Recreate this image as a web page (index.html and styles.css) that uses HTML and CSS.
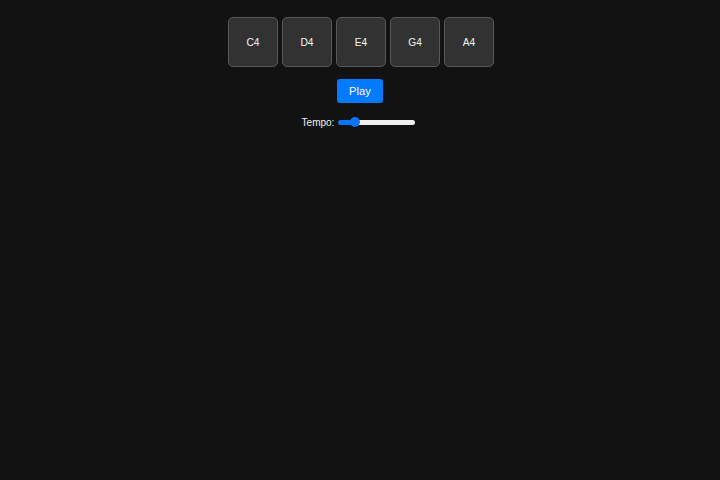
FILE: index.html
```html
<!DOCTYPE html>
<html lang="en">
<head>
<meta charset="utf-8">
<title>Sequencer</title>
<link rel="stylesheet" href="styles.css">
</head>
<body>
<main class="app">
  <div class="pads">
    <div class="pad">C4</div>
    <div class="pad">D4</div>
    <div class="pad">E4</div>
    <div class="pad">G4</div>
    <div class="pad">A4</div>
  </div>
  <button class="play">Play</button>
  <div class="tempo">
    <label class="tempo-label" for="tempo">Tempo:</label>
    <input class="tempo-range" id="tempo" type="range" min="0" max="100" value="17">
  </div>
</main>
</body>
</html>
```

FILE: styles.css
```css
html, body {
  margin: 0;
  padding: 0;
  background: #121212;
  height: 100%;
}

body {
  font-family: "Liberation Sans", Arial, sans-serif;
  color: #f0f0f0;
}

.app {
  display: flex;
  flex-direction: column;
  align-items: center;
  padding-top: 17px;
}

.pads {
  display: flex;
  gap: 4px;
  padding-left: 2px;
}

.pad {
  box-sizing: border-box;
  width: 50px;
  height: 50px;
  display: flex;
  align-items: center;
  justify-content: center;
  background: #323232;
  border: 1px solid #585858;
  border-radius: 5px;
  font-size: 10.2px;
  color: #f4f4f4;
}

.play {
  margin-top: 12px;
  box-sizing: border-box;
  width: 46px;
  height: 24px;
  padding: 0;
  border: none;
  border-radius: 3px;
  background: #007bff;
  color: #ffffff;
  font-family: "Liberation Sans", Arial, sans-serif;
  font-size: 11.2px;
}

.tempo {
  margin-top: 13px;
  margin-right: 3px;
  height: 12px;
  display: flex;
  align-items: center;
  gap: 4px;
}

.tempo-label {
  font-size: 10px;
  line-height: 12px;
  color: #f0f0f0;
  padding-top: 1px;
}

.tempo-range {
  -webkit-appearance: none;
  appearance: none;
  margin: 0;
  width: 77px;
  height: 5px;
  border-radius: 3px;
  background: linear-gradient(to right, #0a75f5 0, #0a75f5 17%, #efefef 17%, #efefef 100%);
  outline: none;
}

.tempo-range::-webkit-slider-thumb {
  -webkit-appearance: none;
  appearance: none;
  width: 10px;
  height: 10px;
  border-radius: 50%;
  background: #0a75f5;
  border: none;
}
```
